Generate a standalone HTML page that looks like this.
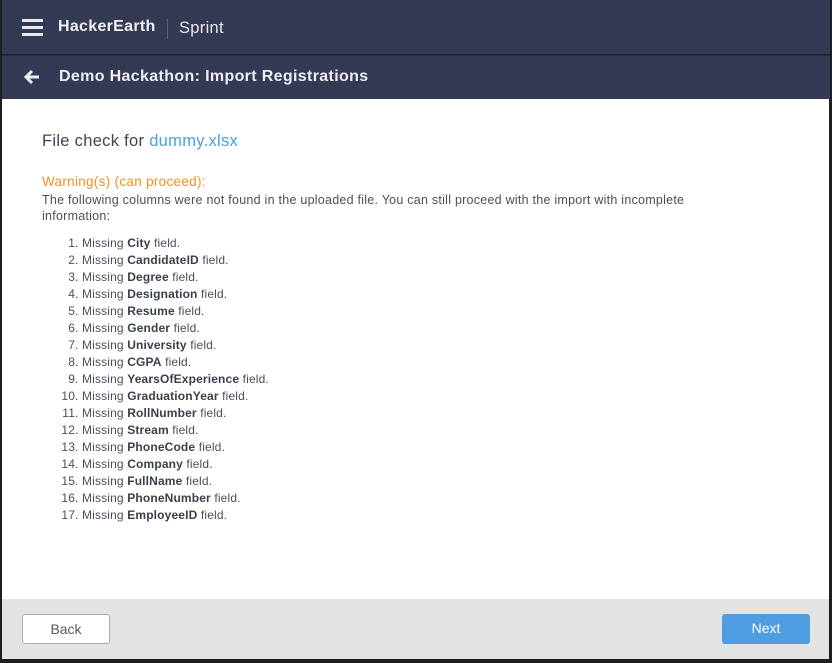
<!DOCTYPE html>
<html><head><style>
*{margin:0;padding:0;box-sizing:border-box}
body{width:832px;height:663px;background:#1e1e1e;font-family:"Liberation Sans",sans-serif;position:relative;overflow:hidden}
.top{position:absolute;left:2px;top:0;width:828px;height:54px;background:#343a54}
.sub{position:absolute;left:2px;top:55px;width:828px;height:44px;background:#343a54;border-top:1px solid #2a2f45}
.main{position:absolute;left:2px;top:99px;width:827px;height:500px;background:#fff}
.foot{position:absolute;left:2px;top:599px;width:827px;height:60px;background:#e3e3e3}
.ham{position:absolute;left:22px;top:19px;width:21px}
.ham i{display:block;height:3px;background:#e8e8ee;margin-bottom:4px}
.brand{position:absolute;left:58px;top:18px;color:#f0f0f4;font-size:16px;font-weight:bold;letter-spacing:0.3px}
.sep{position:absolute;left:167px;top:19px;width:1px;height:20px;background:#5c6180}
.spr{position:absolute;left:179px;top:19px;color:#e8e8ee;font-size:16.5px;letter-spacing:0.3px}
.title{position:absolute;left:59px;top:68px;color:#eceef2;font-size:16px;font-weight:bold;letter-spacing:0.35px}
.h{position:absolute;left:42px;top:132px;font-size:16.5px;color:#3e4452;letter-spacing:0.3px}
.h span{color:#4a9ee0}
.warn{position:absolute;left:42px;top:174px;font-size:13.5px;color:#f39223;letter-spacing:0.3px}
.desc{position:absolute;left:42px;top:192px;width:660px;font-size:12.5px;line-height:16px;color:#4a4f5a;letter-spacing:0.25px}
ol{position:absolute;left:82px;top:235px;font-size:12px;line-height:17px;color:#4a4f5a;letter-spacing:0.15px}
ol b{color:#3a3f4a}
.btn{position:absolute;top:614px;width:88px;height:30px;border-radius:3px;font-size:14px;text-align:center;line-height:29px}
.back{left:22px;background:#fff;border:1px solid #a9acb3;color:#555a63}
.next{left:722px;background:#4e9de0;color:#fff}
</style></head><body>
<div class="top"></div><div class="sub"></div><div class="main"></div><div class="foot"></div>
<div class="ham"><i></i><i></i><i></i></div>
<div class="brand">HackerEarth</div><div class="sep"></div><div class="spr">Sprint</div>
<svg style="position:absolute;left:24px;top:69px" width="16" height="16" viewBox="0 0 16 16"><path d="M8 2L2 8l6 6M2.5 8H15" stroke="#eceef2" stroke-width="3" fill="none"/></svg>
<div class="title">Demo Hackathon: Import Registrations</div>
<div class="h">File check for <span>dummy.xlsx</span></div>
<div class="warn">Warning(s) (can proceed):</div>
<div class="desc">The following columns were not found in the uploaded file. You can still proceed with the import with incomplete<br>information:</div>
<ol>
<li>Missing <b>City</b> field.</li>
<li>Missing <b>CandidateID</b> field.</li>
<li>Missing <b>Degree</b> field.</li>
<li>Missing <b>Designation</b> field.</li>
<li>Missing <b>Resume</b> field.</li>
<li>Missing <b>Gender</b> field.</li>
<li>Missing <b>University</b> field.</li>
<li>Missing <b>CGPA</b> field.</li>
<li>Missing <b>YearsOfExperience</b> field.</li>
<li>Missing <b>GraduationYear</b> field.</li>
<li>Missing <b>RollNumber</b> field.</li>
<li>Missing <b>Stream</b> field.</li>
<li>Missing <b>PhoneCode</b> field.</li>
<li>Missing <b>Company</b> field.</li>
<li>Missing <b>FullName</b> field.</li>
<li>Missing <b>PhoneNumber</b> field.</li>
<li>Missing <b>EmployeeID</b> field.</li>
</ol>
<div class="btn back">Back</div>
<div class="btn next">Next</div>
</body></html>
